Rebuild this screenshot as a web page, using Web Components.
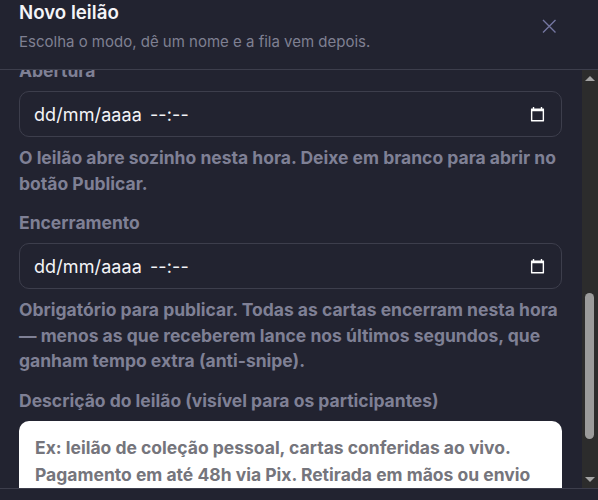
<!DOCTYPE html>
<html lang="pt-BR">
<head>
<meta charset="utf-8">
<title>Novo leilão</title>
<style>
  html, body { margin: 0; height: 100%; background: #222330; overflow: hidden; }
  body { font-family: Inter, "Liberation Sans", sans-serif; }
</style>
</head>
<body>
<leilao-modal>
  <span slot="title">Novo leilão</span>
  <span slot="subtitle">Escolha o modo, dê um nome e a fila vem depois.</span>

  <form-field label="Abertura">
    <date-input></date-input>
    <span slot="hint">O leilão abre sozinho nesta hora. Deixe em branco para abrir no botão Publicar.</span>
  </form-field>
  <form-field label="Encerramento">
    <date-input></date-input>
    <span slot="hint">Obrigatório para publicar. Todas as cartas encerram nesta hora — menos as que receberem lance nos últimos segundos, que ganham tempo extra (anti-snipe).</span>
  </form-field>
  <form-field label="Descrição do leilão (visível para os participantes)">
    <text-box>Ex: leilão de coleção pessoal, cartas conferidas ao vivo. Pagamento em até 48h via Pix. Retirada em mãos ou envio</text-box>
  </form-field>
</leilao-modal>

<script>
class LeilaoModal extends HTMLElement {
    constructor() {
        super();
        this.attachShadow({ mode: "open" });
        this.render();
    }

    render() {
        this.shadowRoot.innerHTML = `
            <style>
                :host { display: flex; flex-direction: column; height: 500px; width: 598px; background: #222330; color: #fff; }
                header { flex: none; height: 70px; box-sizing: border-box; border-bottom: 1px solid #3d3e4c; padding: 0 41px 0 19px; display: flex; justify-content: space-between; }
                h2 { margin: 2px 0 0; font-size: 18.7px; line-height: 22px; font-weight: 600; color: #f4f4f8; }
                p { margin: 8px 0 0; font-size: 15px; line-height: 19px; color: #7f8092; }
                svg { display: block; margin-top: 18px; }
                .middle { flex: none; height: 418px; display: flex; }
                .scroll { flex: 1; min-width: 0; overflow: hidden; }
                .content { margin-top: -11px; padding: 0 20px 0 19px; display: flex; flex-direction: column; gap: 15px; }
                footer { flex: 1; border-top: 1px solid #3d3e4c; }
            </style>
            <header>
                <div>
                    <h2><slot name="title"></slot></h2>
                    <p><slot name="subtitle"></slot></p>
                </div>
                <svg width="16" height="16" viewBox="0 0 16 16" fill="none" stroke="#7476a0" stroke-width="1.4"><path d="M2 2 L14.5 14.5 M14.5 2 L2 14.5"/></svg>
            </header>
            <div class="middle">
                <div class="scroll"><div class="content"><slot></slot></div></div>
                <fake-scrollbar></fake-scrollbar>
            </div>
            <footer></footer>
        `;
    }
}

class FormField extends HTMLElement {
    constructor() {
        super();
        this.attachShadow({ mode: "open" });
        this.render();
    }

    render() {
        this.shadowRoot.innerHTML = `
            <style>
                :host { display: block; }
                label { display: block; font-size: 17.5px; line-height: 24px; font-weight: 700; color: #7f8095; margin-bottom: 8px; }
                .hint { display: block; margin-top: 8px; font-size: 17.5px; line-height: 25.5px; font-weight: 700; color: #7f8095; }
                .hint:empty { display: none; }
            </style>
            <label>${this.getAttribute("label")}</label>
            <slot></slot>
            <div class="hint"><slot name="hint"></slot></div>
        `;
    }
}

class DateInput extends HTMLElement {
    constructor() {
        super();
        this.attachShadow({ mode: "open" });
        this.shadowRoot.innerHTML = `
            <style>
                :host { display: flex; align-items: center; justify-content: space-between; height: 46px; box-sizing: border-box; border: 1px solid #3d3e4c; border-radius: 10px; padding: 0 16px 0 14px; font-size: 18px; letter-spacing: .1px; color: #f4f4f8; }
                .time { margin-left: 8px; }
                svg { display: block; }
            </style>
            <div><span>dd/mm/aaaa</span><span class="time">--:--</span></div>
            <svg width="15" height="16" viewBox="0 0 16 16"><path fill="#fff" fill-rule="evenodd" d="M3 0.5h1.5v1.5h7V0.5H13V2h1.5a0.5 0.5 0 0 1 .5.5v13a.5.5 0 0 1-.5.5h-13a.5.5 0 0 1-.5-.5v-13a.5.5 0 0 1 .5-.5H3zM2.5 5v9.5h11V5z"/></svg>
        `;
    }
}

class TextBox extends HTMLElement {
    constructor() {
        super();
        this.attachShadow({ mode: "open" });
        this.shadowRoot.innerHTML = `
            <style>
                :host { display: block; margin-top: 1px; background: #fff; border-radius: 10px; padding: 13px 16px; min-height: 120px; font-size: 17.5px; line-height: 27.5px; font-weight: 700; color: #75757c; }
            </style>
            <slot></slot>
        `;
    }
}

class FakeScrollbar extends HTMLElement {
    constructor() {
        super();
        this.attachShadow({ mode: "open" });
        this.shadowRoot.innerHTML = `
            <style>
                :host { flex: none; width: 16px; background: #2c2c2c; display: flex; flex-direction: column; align-items: center; justify-content: space-between; padding: 6px 0; box-sizing: border-box; position: relative; }
                .up { border: 5px solid transparent; border-top: 0; border-bottom: 5px solid #a3a3a3; }
                .down { border: 5px solid transparent; border-bottom: 0; border-top: 5px solid #a3a3a3; }
                .thumb { position: absolute; left: 3px; right: 4px; top: 223px; height: 146px; background: #9b9b9b; border-radius: 5px; }
            </style>
            <div class="up"></div>
            <div class="thumb"></div>
            <div class="down"></div>
        `;
    }
}

customElements.define("leilao-modal", LeilaoModal);
customElements.define("form-field", FormField);
customElements.define("date-input", DateInput);
customElements.define("text-box", TextBox);
customElements.define("fake-scrollbar", FakeScrollbar);
</script>
</body>
</html>
